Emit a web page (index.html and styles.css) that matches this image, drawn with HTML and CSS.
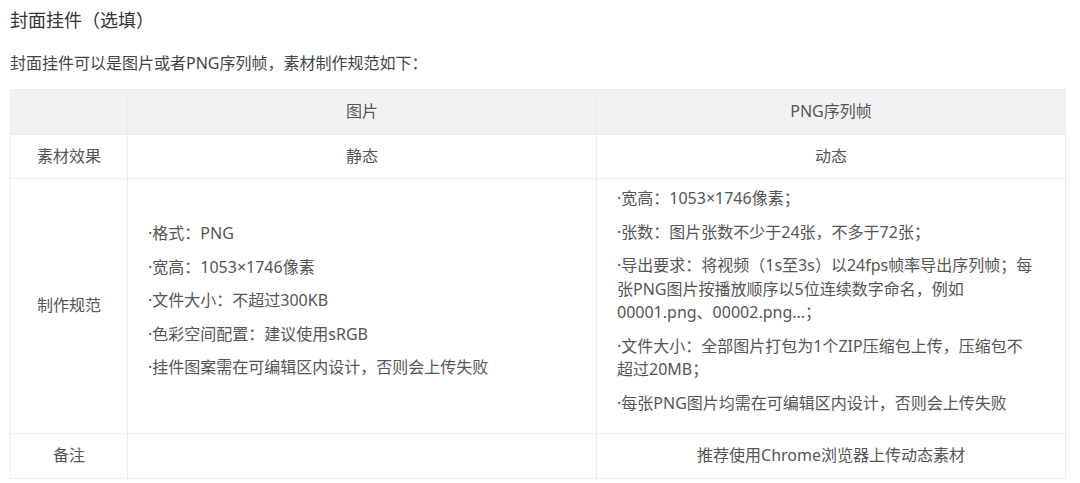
FILE: index.html
```html
<!DOCTYPE html>
<html lang="zh-CN">
<head>
    <meta charset="UTF-8">
    <meta name="viewport" content="width=device-width, initial-scale=1.0">
    <title>封面挂件（选填）</title>
    <link rel="stylesheet" href="styles.css">
</head>
<body>
    <div class="container">
        <h3 class="title">封面挂件（选填）</h3>
        <p class="intro">封面挂件可以是图片或者PNG序列帧，素材制作规范如下：</p>

        <table class="spec-table">
            <colgroup>
                <col class="col-label">
                <col class="col-image">
                <col class="col-png">
            </colgroup>
            <thead>
                <tr>
                    <th></th>
                    <th>图片</th>
                    <th>PNG序列帧</th>
                </tr>
            </thead>
            <tbody>
                <tr>
                    <td>素材效果</td>
                    <td>静态</td>
                    <td>动态</td>
                </tr>
                <tr>
                    <td>制作规范</td>
                    <td class="rules">
                        <p>·格式：PNG</p>
                        <p>·宽高：1053×1746像素</p>
                        <p>·文件大小：不超过300KB</p>
                        <p>·色彩空间配置：建议使用sRGB</p>
                        <p>·挂件图案需在可编辑区内设计，否则会上传失败</p>
                    </td>
                    <td class="rules">
                        <p>·宽高：1053×1746像素；</p>
                        <p>·张数：图片张数不少于24张，不多于72张；</p>
                        <p>·导出要求：将视频（1s至3s）以24fps帧率导出序列帧；每张PNG图片按播放顺序以5位连续数字命名，例如00001.png、00002.png…；</p>
                        <p>·文件大小：全部图片打包为1个ZIP压缩包上传，压缩包不<span class="nowrap">超过20MB；</span></p>
                        <p>·每张PNG图片均需在可编辑区内设计，否则会上传失败</p>
                    </td>
                </tr>
                <tr>
                    <td>备注</td>
                    <td></td>
                    <td>推荐使用Chrome浏览器上传动态素材</td>
                </tr>
            </tbody>
        </table>
    </div>
</body>
</html>
```

FILE: styles.css
```css
body {
    font-family: "Noto Sans", "Noto Sans CJK SC", sans-serif;
    background-color: #fff;
    color: #333;
    margin: 0;
    padding: 0 10px;
}
.title {
    font-size: 18px;
    font-weight: normal;
    line-height: 24px;
    margin: 8px 0 19px;
    color: #333;
}
.intro {
    font-size: 16px;
    line-height: 24px;
    margin: 0 0 14px;
    color: #444;
}
.spec-table {
    width: 1056px;
    table-layout: fixed;
    border-collapse: collapse;
    font-size: 16px;
    line-height: 23.5px;
    color: #555;
}
.col-label {
    width: 117px;
}
.col-image {
    width: 469px;
}
.spec-table th,
.spec-table td {
    border: 1px solid #ececec;
    padding: 10px 20px;
    text-align: center;
    vertical-align: middle;
    font-weight: normal;
}
.spec-table th {
    background-color: #f2f2f2;
}
.spec-table td.rules {
    text-align: left;
    padding: 8px 20px;
}
.rules p {
    margin: 0 0 10px;
}
.nowrap {
    white-space: nowrap;
}
```
